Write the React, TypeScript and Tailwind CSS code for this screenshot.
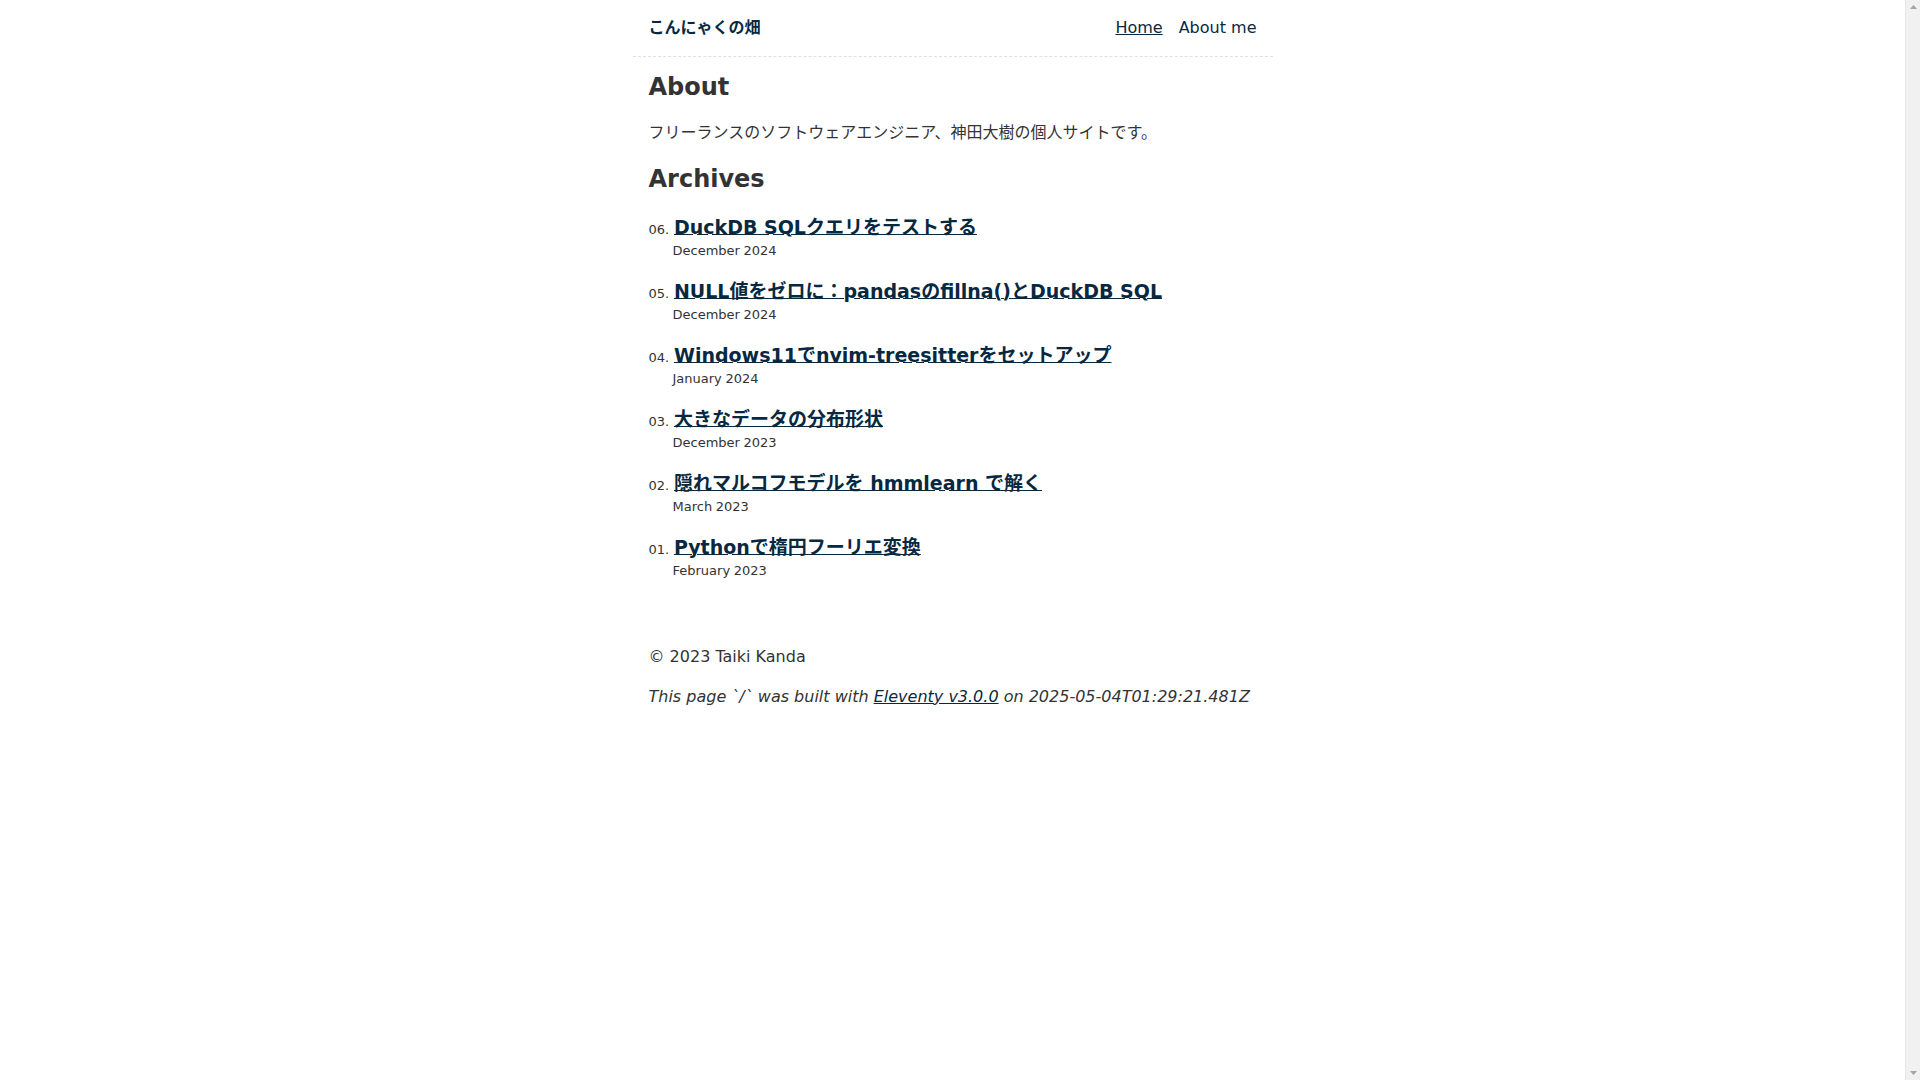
import React from 'react';

const posts = [
  { n: '06', title: 'DuckDB SQLクエリをテストする', date: 'December 2024' },
  { n: '05', title: 'NULL値をゼロに：pandasのfillna()とDuckDB SQL', date: 'December 2024' },
  { n: '04', title: 'Windows11でnvim-treesitterをセットアップ', date: 'January 2024' },
  { n: '03', title: '大きなデータの分布形状', date: 'December 2023' },
  { n: '02', title: '隠れマルコフモデルを hmmlearn で解く', date: 'March 2023' },
  { n: '01', title: 'Pythonで楕円フーリエ変換', date: 'February 2023' },
];

export default function App() {
  return (
    <div className="flex h-screen bg-white text-[#333] font-['DejaVu_Sans','Noto_Sans_CJK_JP',sans-serif]">
      <div className="min-w-0 flex-1">
        <div className="mx-auto max-w-[40em]">
          <header className="flex flex-wrap items-center justify-between gap-x-2 gap-y-4 p-4 border-b border-dashed border-[#e0e0e0]">
            <a href="#" className="mr-8 text-base font-bold text-[#082840] no-underline leading-[1.5]">
              こんにゃくの畑
            </a>
            <nav>
              <ul className="m-0 flex list-none gap-4 p-0">
                <li className="leading-[1.5]">
                  <a href="#" className="text-[#082840] underline">Home</a>
                </li>
                <li className="leading-[1.5]">
                  <a href="#" className="text-[#082840] no-underline">About me</a>
                </li>
              </ul>
            </nav>
          </header>

          <main className="p-4">
            <h2 className="mt-0 mb-[0.83em] text-[24px] font-bold leading-[normal]">About</h2>
            <p className="my-4 leading-[1.5]">
              フリーランスのソフトウェアエンジニア、神田大樹の個人サイトです。
            </p>
            <h2 className="my-[0.83em] text-[24px] font-bold leading-[normal]">Archives</h2>
            <ul className="my-4 list-none pl-6">
              {posts.map((p) => (
                <li key={p.n} className="mb-4 flex flex-wrap items-baseline leading-[1.5]">
                  <span className="-ml-6 inline-block text-right text-[13px] leading-none text-[#333]">
                    {p.n + '. '}
                  </span>
                  <a
                    href="#"
                    className="basis-[calc(100%-1.5rem)] pl-[0.25em] pr-[0.5em] text-[19px] font-bold text-[#082840] underline decoration-1 underline-offset-0 [text-underline-position:from-font]"
                  >
                    {p.title}
                  </a>
                  <time className="text-[13px] text-[#333] [word-spacing:-0.5px]">{p.date}</time>
                </li>
              ))}
            </ul>
          </main>

          <footer className="p-4">
            <p className="my-4 leading-[1.5]">© 2023 Taiki Kanda</p>
            <p className="mt-4 mb-0 leading-[1.5]">
              <em>
                This page `/` was built with{' '}
                <a href="#" className="text-[#082840] underline">Eleventy v3.0.0</a> on 2025-05-04T01:29:21.481Z
              </em>
            </p>
          </footer>
        </div>
      </div>

      <div className="flex w-[15px] shrink-0 flex-col items-center justify-between border-l border-[#e8e8e8] bg-[#f1f1f1] py-[5px]">
        <svg width="7" height="4" viewBox="0 0 7 4"><path d="M0 4 L3.5 0 L7 4 Z" fill="#a3a3a3" /></svg>
        <svg width="7" height="4" viewBox="0 0 7 4"><path d="M0 0 L3.5 4 L7 0 Z" fill="#a3a3a3" /></svg>
      </div>
    </div>
  );
}
